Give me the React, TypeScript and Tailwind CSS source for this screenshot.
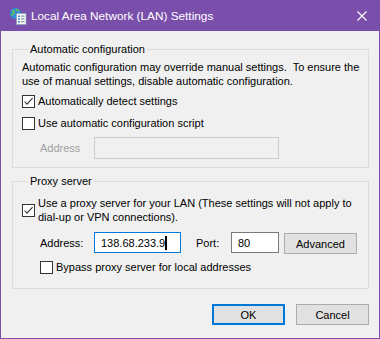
import React from 'react';

const font = { fontFamily: '"Liberation Sans", Arial, sans-serif' };

function Check({ checked }: { checked?: boolean }) {
  return (
    <span className="w-[13px] h-[13px] shrink-0 border border-[#333333] bg-white flex items-center justify-center">
      {checked && (
        <svg width="11" height="11" viewBox="0 0 11 11">
          <polyline points="1.5,5.5 4,8.2 9.6,2.2" fill="none" stroke="#333333" strokeWidth="1.1" />
        </svg>
      )}
    </span>
  );
}

function Btn({ label, primary }: { label: string; primary?: boolean }) {
  return (
    <button
      className={`w-[73px] h-[21px] bg-[#e1e1e1] text-[11px] text-black flex items-center justify-center ${
        primary ? 'border-2 border-[#0078d7]' : 'border border-[#adadad]'
      }`}
    >
      {label}
    </button>
  );
}

export default function App() {
  return (
    <div
      className="w-[380px] h-[339px] bg-[#7a4fab] px-[1px] pb-[1px] flex flex-col text-[11px] leading-[14px] text-black"
      style={font}
    >
      <div className="h-[31px] flex items-center text-white shrink-0">
        <svg className="ml-[8px]" width="18" height="18" viewBox="0 0 18 18">
          <circle cx="6.5" cy="6.5" r="5.5" fill="#2f8fd8" />
          <path d="M3 3.5c1.5 0 2.5 1 2 2.5s-2 1-2.5 2.5M7 2c1 1 2.5 1 3 2.5" fill="none" stroke="#6cc04a" strokeWidth="1.6" />
          <rect x="7.5" y="6.5" width="9.5" height="11" fill="#ffffff" stroke="#8aa0b8" strokeWidth="0.8" />
          <rect x="9" y="8.5" width="2" height="1.4" fill="#3a78c8" />
          <rect x="12" y="8.5" width="3.5" height="1.2" fill="#7a8ea8" />
          <rect x="9" y="11.3" width="2" height="1.4" fill="#3a78c8" />
          <rect x="12" y="11.3" width="3.5" height="1.2" fill="#7a8ea8" />
          <rect x="9" y="14.1" width="2" height="1.4" fill="#3a78c8" />
          <rect x="12" y="14.1" width="3.5" height="1.2" fill="#7a8ea8" />
        </svg>
        <span className="ml-[4px] text-[11.8px]">Local Area Network (LAN) Settings</span>
        <svg className="ml-auto mr-[12px]" width="10" height="10" viewBox="0 0 10 10">
          <path d="M0.5 0.5L9.5 9.5M9.5 0.5L0.5 9.5" stroke="#ffffff" strokeWidth="1.1" />
        </svg>
      </div>

      <div className="flex-1 bg-[#f0f0f0] flex flex-col pl-[11px] pr-[10px]">
        <fieldset className="mt-[11px] border border-[#dcdcdc] pl-[9px] pb-[8px]">
          <legend className="ml-[6px] px-[2px]">Automatic configuration</legend>
          <p className="mt-[4px]">
            Automatic configuration may override manual settings.&nbsp; To ensure the
            <br />
            use of manual settings, disable automatic configuration.
          </p>
          <label className="mt-[2px] h-[22px] flex items-center gap-[3px]">
            <Check checked />
            <span>Automatically detect settings</span>
          </label>
          <label className="h-[22px] flex items-center gap-[3px]">
            <Check />
            <span>Use automatic configuration script</span>
          </label>
          <div className="mt-[3px] flex items-center">
            <span className="ml-[18px] w-[54px] text-[#a0a0a0]">Address</span>
            <div className="w-[185px] h-[22px] border border-[#cccccc] bg-[#f0f0f0]" />
          </div>
        </fieldset>

        <fieldset className="mt-[6px] border border-[#dcdcdc] pl-[9px] pb-[14px]">
          <legend className="ml-[6px] px-[2px]">Proxy server</legend>
          <label className="mt-[8px] flex items-center gap-[3px]">
            <Check checked />
            <span>
              Use a proxy server for your LAN (These settings will not apply to
              <br />
              dial-up or VPN connections).
            </span>
          </label>
          <div className="mt-[8px] flex items-start">
            <span className="ml-[18px] w-[54px] h-[21px] flex items-center">Address:</span>
            <div className="w-[87px] h-[21px] border border-[#0078d7] bg-white flex items-center pl-[6px]">
              <span>138.68.233.9</span>
              <span className="w-[2px] h-[14px] bg-black" />
            </div>
            <span className="ml-[15px] w-[35px] h-[21px] flex items-center">Port:</span>
            <div className="w-[48px] h-[21px] border border-[#7a7a7a] bg-white flex items-center pl-[6px]">
              80
            </div>
            <div className="ml-[5px] mt-[1px]">
              <Btn label="Advanced" />
            </div>
          </div>
          <label className="mt-[6px] ml-[18px] flex items-center gap-[3px]">
            <Check />
            <span>Bypass proxy server for local addresses</span>
          </label>
        </fieldset>

        <div className="mt-[15px] flex justify-end gap-[11px]">
          <Btn label="OK" primary />
          <Btn label="Cancel" />
        </div>
      </div>
    </div>
  );
}
